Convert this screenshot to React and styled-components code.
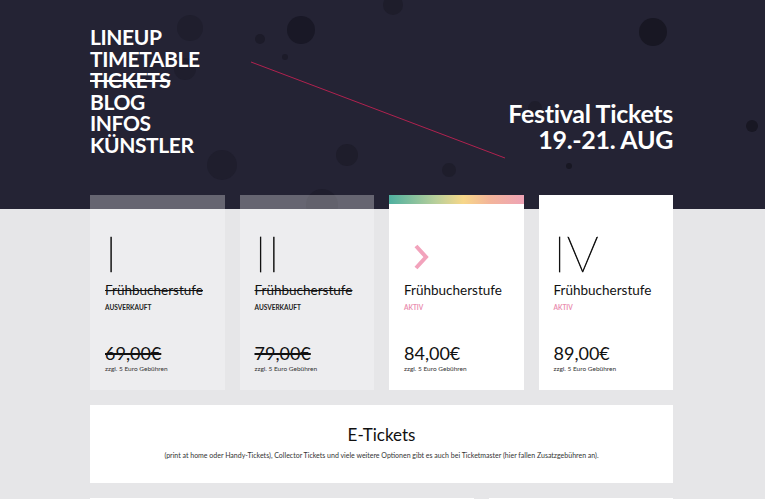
import React from "react";
import styled, { createGlobalStyle } from "styled-components";

const GlobalStyle = createGlobalStyle`
  html, body { margin: 0; padding: 0; }
  body {
    background: #e6e6e8;
    font-family: Lato, "Open Sans", sans-serif;
    color: #1c1c1c;
  }
`;

const Hero = styled.header`
  position: relative;
  height: 209px;
  background: #242334;
  overflow: hidden;
`;

const Decor = styled.svg`
  position: absolute;
  left: 0;
  top: 0;
  width: 765px;
  height: 209px;
`;

const HeroInner = styled.div`
  position: relative;
  width: 583px;
  margin: 0 92px 0 90px;
  padding-top: 26px;
  display: flex;
  justify-content: space-between;
  align-items: flex-start;
`;

const Nav = styled.nav`
  display: flex;
  flex-direction: column;
`;

const NavItem = styled.a`
  font-size: 21px;
  line-height: 21.5px;
  font-weight: 700;
  color: #fff;
  text-transform: uppercase;
  text-decoration: ${(p) => (p.$struck ? "line-through" : "none")};
  text-decoration-thickness: 2px;
  letter-spacing: -0.4px;
`;

const Title = styled.h1`
  margin: 74px 0 0;
  font-size: 25px;
  line-height: 26px;
  font-weight: 700;
  color: #fff;
  text-align: right;
  letter-spacing: -0.3px;
`;

const Main = styled.main`
  width: 583px;
  margin: -14px 92px 0 90px;
  position: relative;
  display: flex;
  flex-direction: column;
  gap: 15px;
`;

const Cards = styled.div`
  display: grid;
  grid-template-columns: repeat(4, minmax(0, 1fr));
  gap: 15px;
`;

const Card = styled.div`
  position: relative;
  height: 195px;
  box-sizing: border-box;
  padding: 33px 15px 0;
  display: flex;
  flex-direction: column;
  background: ${(p) => (p.$sold ? "rgba(255,255,255,0.3)" : "#fff")};
`;

const GradientBar = styled.div`
  position: absolute;
  left: 0;
  right: 0;
  top: 0;
  height: 9px;
  background: linear-gradient(90deg, #4fb0a0 0%, #b9cf9a 35%, #f7d789 55%, #f3b49a 75%, #eea3b6 100%);
`;

const Numeral = styled.div`
  height: 50px;
  font-size: 50px;
  line-height: 50px;
  font-weight: 100;
  color: #111;
  -webkit-text-stroke: 0.7px #111;
  letter-spacing: 1px;
  display: flex;
  align-items: flex-start;
`;

const Chevron = styled.svg`
  margin: 16px 0 0 10px;
`;

const CardTitle = styled.div`
  margin-top: 3px;
  font-size: 13.5px;
  line-height: 18px;
  color: #111;
  text-decoration: ${(p) => (p.$struck ? "line-through" : "none")};
`;

const Status = styled.div`
  margin-top: 4px;
  font-size: 6.5px;
  line-height: 10px;
  font-weight: 700;
  text-transform: uppercase;
  color: ${(p) => (p.$active ? "#ea8fb0" : "#222")};
`;

const Price = styled.div`
  margin-top: auto;
  font-size: 18px;
  line-height: 22px;
  color: #111;
  text-decoration: ${(p) => (p.$struck ? "line-through" : "none")};
  text-decoration-thickness: 1.5px;
`;

const Fee = styled.div`
  margin: 0 0 16px;
  font-size: 6.5px;
  line-height: 10px;
  color: #333;
`;

const InfoBox = styled.section`
  height: 78px;
  background: #fff;
  display: flex;
  flex-direction: column;
  align-items: center;
  padding-top: 19px;
  box-sizing: border-box;
`;

const InfoTitle = styled.h2`
  margin: 0;
  font-size: 17px;
  line-height: 22px;
  font-weight: 400;
  color: #111;
`;

const InfoText = styled.p`
  margin: 4px 0 0;
  font-size: 7px;
  line-height: 10px;
  color: #333;
`;

const BottomRow = styled.div`
  display: grid;
  grid-template-columns: 384px 1fr;
  gap: 15px;
`;

const Panel = styled.div`
  height: 120px;
  background: #fff;
`;

const circles = [
  [190, 28, 13, "#1f1e2d"],
  [301, 30, 14, "#191826"],
  [260, 39, 5, "#1c1b29"],
  [285, 57, 3, "#1c1b29"],
  [185, 69, 11, "#1f1e2d"],
  [347, 155, 11, "#1e1d2b"],
  [222, 165, 15, "#1f1e2d"],
  [322, 205, 16, "#1f1e2d"],
  [393, 5, 10, "#1e1d2b"],
  [653, 32, 14, "#181723"],
  [535, 108, 7, "#1e1d2b"],
  [752, 126, 6, "#181723"],
  [449, 170, 7, "#1e1d2b"],
  [569, 166, 3, "#181723"],
];

const tiers = [
  { num: "I", price: "69,00€", sold: true },
  { num: "II", price: "79,00€", sold: true },
  { num: null, price: "84,00€", sold: false, current: true },
  { num: "IV", price: "89,00€", sold: false },
];

const navItems = ["Lineup", "Timetable", "Tickets", "Blog", "Infos", "Künstler"];

export default function App() {
  return (
    <>
      <GlobalStyle />
      <Hero>
        <Decor viewBox="0 0 765 209">
          {circles.map(([cx, cy, r, fill], i) => (
            <circle key={i} cx={cx} cy={cy} r={r} fill={fill} />
          ))}
          <line x1="251" y1="62" x2="505" y2="158" stroke="#b0224f" strokeWidth="1" />
        </Decor>
        <HeroInner>
          <Nav>
            {navItems.map((n) => (
              <NavItem key={n} $struck={n === "Tickets"}>
                {n}
              </NavItem>
            ))}
          </Nav>
          <Title>
            Festival Tickets
            <br />
            19.-21. AUG
          </Title>
        </HeroInner>
      </Hero>
      <Main>
        <Cards>
          {tiers.map((t, i) => (
            <Card key={i} $sold={t.sold}>
              {t.current && <GradientBar />}
              <Numeral>
                {t.current ? (
                  <Chevron width="16" height="26" viewBox="0 0 16 26">
                    <polyline points="2,2 12,13 2,24" fill="none" stroke="#f2a3bc" strokeWidth="4" />
                  </Chevron>
                ) : (
                  t.num
                )}
              </Numeral>
              <CardTitle $struck={t.sold}>Frühbucherstufe</CardTitle>
              <Status $active={!t.sold}>{t.sold ? "Ausverkauft" : "Aktiv"}</Status>
              <Price $struck={t.sold}>{t.price}</Price>
              <Fee>zzgl. 5 Euro Gebühren</Fee>
            </Card>
          ))}
        </Cards>
        <InfoBox>
          <InfoTitle>E-Tickets</InfoTitle>
          <InfoText>
            (print at home oder Handy-Tickets), Collector Tickets und viele weitere Optionen gibt es auch bei Ticketmaster (hier fallen Zusatzgebühren an).
          </InfoText>
        </InfoBox>
        <BottomRow>
          <Panel />
          <Panel />
        </BottomRow>
      </Main>
    </>
  );
}
